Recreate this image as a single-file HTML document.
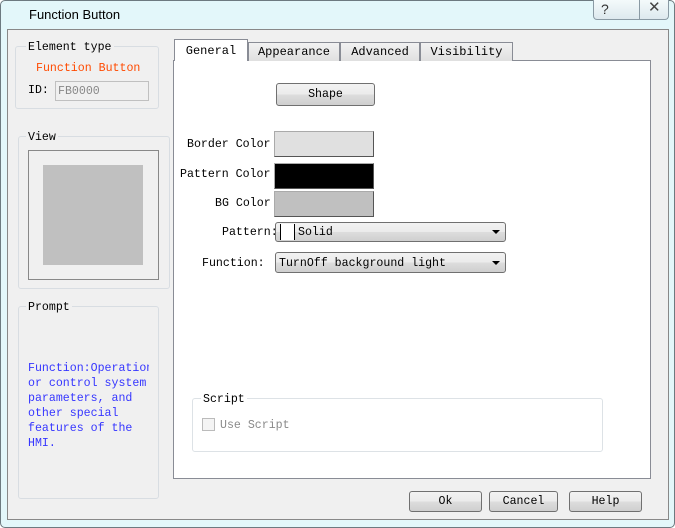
<!DOCTYPE html><html><head><style>
*{margin:0;padding:0;box-sizing:border-box}
body{width:675px;height:528px;background:#fff;position:relative;overflow:hidden;font-family:"Liberation Mono","Noto Sans CJK SC",monospace;font-size:11.6px;color:#000;line-height:16px}
.a{position:absolute}
.win{left:0;top:0;width:675px;height:528px;background:#e3f7fa;border:1px solid #6d7a80;border-radius:5px}
.client{left:7px;top:29px;width:662px;height:491px;background:#f0f0f0;border:1px solid #888}
.grp{border:1px solid #d8dde2;border-radius:3px}
.lbl{background:#f0f0f0;padding:0 2px;line-height:15px}
.btn{border:1px solid #707070;border-radius:3px;background:linear-gradient(#f2f2f2,#ebebeb 50%,#dddddd 51%,#cfcfcf);text-align:center;line-height:19px}
.tab{border:1px solid #898c95;border-bottom:none;background:linear-gradient(#f2f2f2,#e0e0e0);text-align:center;line-height:19px;font-size:12px}
.combo{border:1px solid #707070;border-radius:3px;background:linear-gradient(#f2f2f2,#ebebeb 50%,#dddddd 51%,#cfcfcf)}
.arr{width:0;height:0;border-left:4px solid transparent;border-right:4px solid transparent;border-top:4px solid #000}
.sw{border:1px solid #aaa;border-right-color:#555;border-bottom-color:#555}
</style></head><body>
<div class="a win"></div>
<div class="a" style="left:29px;top:7px;font-family:'Liberation Sans',sans-serif;font-size:13px">Function Button</div>
<div class="a" style="left:593px;top:0;width:76px;height:20px;border:1px solid #8a9aa4;border-top:none;border-radius:0 0 4px 4px;background:linear-gradient(#f4fafb,#dde9ee)"></div>
<div class="a" style="left:639px;top:0;width:1px;height:19px;background:#8a9aa4"></div>
<div class="a" style="left:601px;top:1px;font-family:'Liberation Sans',sans-serif;font-size:14px;color:#333">?</div>
<div class="a" style="left:648px;top:0px;font-family:'Liberation Sans',sans-serif;font-size:15px;color:#444">✕</div>
<div class="a client"></div>

<div class="a grp" style="left:15px;top:46px;width:144px;height:63px"></div>
<div class="a lbl" style="left:26px;top:40px">Element type</div>
<div class="a" style="left:36px;top:61px;color:#ff4a00">Function Button</div>
<div class="a" style="left:28px;top:83px">ID:</div>
<div class="a" style="left:55px;top:81px;width:94px;height:20px;border:1px solid #c0c0c0;background:#f0f0f0;color:#888;padding-left:2px;line-height:19px">FB0000</div>

<div class="a grp" style="left:18px;top:136px;width:152px;height:153px"></div>
<div class="a lbl" style="left:26px;top:130px">View</div>
<div class="a" style="left:28px;top:150px;width:131px;height:130px;border:1px solid #888;background:#f0f0f0"></div>
<div class="a" style="left:43px;top:165px;width:100px;height:100px;background:#c0c0c0"></div>

<div class="a grp" style="left:18px;top:306px;width:141px;height:193px"></div>
<div class="a lbl" style="left:26px;top:300px">Prompt</div>
<div class="a" style="left:28px;top:361px;width:121px;overflow:hidden;white-space:pre;color:#3636ff;line-height:15px">Function:Operation
or control system
parameters, and
other special
features of the
HMI.</div>

<div class="a" style="left:173px;top:60px;width:478px;height:419px;background:#fff;border:1px solid #898c95"></div>
<div class="a tab" style="left:248px;top:42px;width:92px;height:19px">Appearance</div>
<div class="a tab" style="left:340px;top:42px;width:80px;height:19px">Advanced</div>
<div class="a tab" style="left:420px;top:42px;width:93px;height:19px">Visibility</div>
<div class="a tab" style="left:174px;top:39px;width:74px;height:22px;background:#fff;line-height:22px">General</div>

<div class="a btn" style="left:276px;top:83px;width:99px;height:23px;line-height:22px">Shape</div>

<div class="a" style="left:187px;top:137px">Border Color</div>
<div class="a" style="left:180px;top:167px">Pattern Color</div>
<div class="a" style="left:215px;top:196px">BG Color</div>
<div class="a" style="left:222px;top:225px">Pattern:</div>
<div class="a" style="left:202px;top:256px">Function:</div>
<div class="a sw" style="left:274px;top:131px;width:100px;height:26px;background:#e0e0e0"></div>
<div class="a sw" style="left:274px;top:163px;width:100px;height:26px;background:#000"></div>
<div class="a sw" style="left:274px;top:191px;width:100px;height:26px;background:#c0c0c0"></div>

<div class="a combo" style="left:275px;top:222px;width:231px;height:20px"></div>
<div class="a" style="left:280px;top:224px;width:15px;height:16px;background:#fff;border-left:1px solid #000;border-right:1px solid #000"></div>
<div class="a" style="left:298px;top:225px">Solid</div>
<div class="a arr" style="left:492px;top:230px"></div>
<div class="a combo" style="left:275px;top:252px;width:231px;height:21px"></div>
<div class="a" style="left:279px;top:256px">TurnOff background light</div>
<div class="a arr" style="left:492px;top:261px"></div>

<div class="a" style="left:192px;top:398px;width:411px;height:54px;border:1px solid #dde2e6;border-radius:3px"></div>
<div class="a" style="left:201px;top:392px;background:#fff;padding:0 2px;line-height:15px">Script</div>
<div class="a" style="left:202px;top:418px;width:13px;height:13px;border:1px solid #bbb;background:#f4f4f4"></div>
<div class="a" style="left:220px;top:418px;color:#8a8a8a">Use Script</div>

<div class="a btn" style="left:409px;top:491px;width:73px;height:21px">Ok</div>
<div class="a btn" style="left:489px;top:491px;width:69px;height:21px">Cancel</div>
<div class="a btn" style="left:569px;top:491px;width:73px;height:21px">Help</div>
</body></html>
